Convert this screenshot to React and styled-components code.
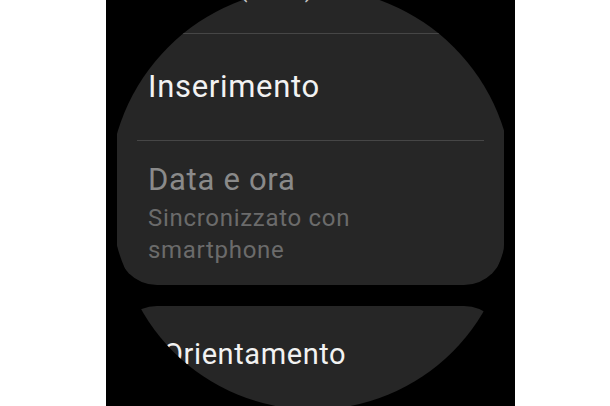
import React from "react";
import styled, { createGlobalStyle } from "styled-components";

const GlobalStyle = createGlobalStyle`
  html, body {
    margin: 0;
    padding: 0;
    background: #ffffff;
  }
  body {
    font-family: Roboto, "Noto Sans", "Liberation Sans", sans-serif;
  }
`;

const Page = styled.div`
  display: flex;
  width: 610px;
  height: 406px;
  background: #ffffff;
`;

const Screen = styled.div`
  margin-left: 106px;
  width: 409px;
  height: 406px;
  background: #000000;
  overflow: hidden;
`;

const List = styled.div`
  display: flex;
  flex-direction: column;
  gap: 21px;
  padding: 0 11px;
  margin-top: ${(p) => p.$scroll}px;
`;

const Card = styled.div`
  display: flex;
  flex-direction: column;
  background: #262626;
  border-radius: 40px;
  min-height: ${(p) => p.$minHeight || 0}px;
  clip-path: circle(${(p) => p.$r}px at ${(p) => p.$cx}px ${(p) => p.$cy}px);
`;

const Row = styled.div`
  display: flex;
  flex-direction: column;
  justify-content: center;
  padding: ${(p) => p.$pad};
  min-height: ${(p) => p.$h || 0}px;
  box-sizing: border-box;
`;

const Title = styled.div`
  font-size: ${(p) => p.$size || 31}px;
  line-height: 38px;
  letter-spacing: ${(p) => p.$ls ?? 0.7}px;
  color: ${(p) => (p.$disabled ? "#8a8a8a" : "#f2f2f2")};
  white-space: nowrap;
`;

const Subtitle = styled.div`
  margin-top: 3px;
  font-size: 24px;
  line-height: 32px;
  letter-spacing: 0.7px;
  color: ${(p) => (p.$disabled ? "#6b6b6b" : "#c4c4c4")};
  white-space: nowrap;
`;

const Divider = styled.div`
  height: 1px;
  margin: 0 20px;
  background: #464646;
`;

export default function App() {
  return (
    <>
      <GlobalStyle />
      <Page>
        <Screen>
          <List $scroll={-88}>
            <Card $r={202} $cx={194} $cy={278}>
              <Row $pad="20px 31px 28px">
                <Title>Lingua</Title>
                <Subtitle>Italiano (Italia)</Subtitle>
              </Row>
              <Divider />
              <Row $pad="0 31px" $h={106}>
                <Title>Inserimento</Title>
              </Row>
              <Divider />
              <Row $pad="20px 31px 19px">
                <Title $disabled>Data e ora</Title>
                <Subtitle $disabled>
                  Sincronizzato con
                  <br />
                  smartphone
                </Subtitle>
              </Row>
            </Card>
            <Card $r={197.5} $cx={196} $cy={-94} $minHeight={160}>
              <Row $pad="29px 46px 20px">
                <Title $size={29} $ls={0.6}>Orientamento</Title>
              </Row>
            </Card>
          </List>
        </Screen>
      </Page>
    </>
  );
}
